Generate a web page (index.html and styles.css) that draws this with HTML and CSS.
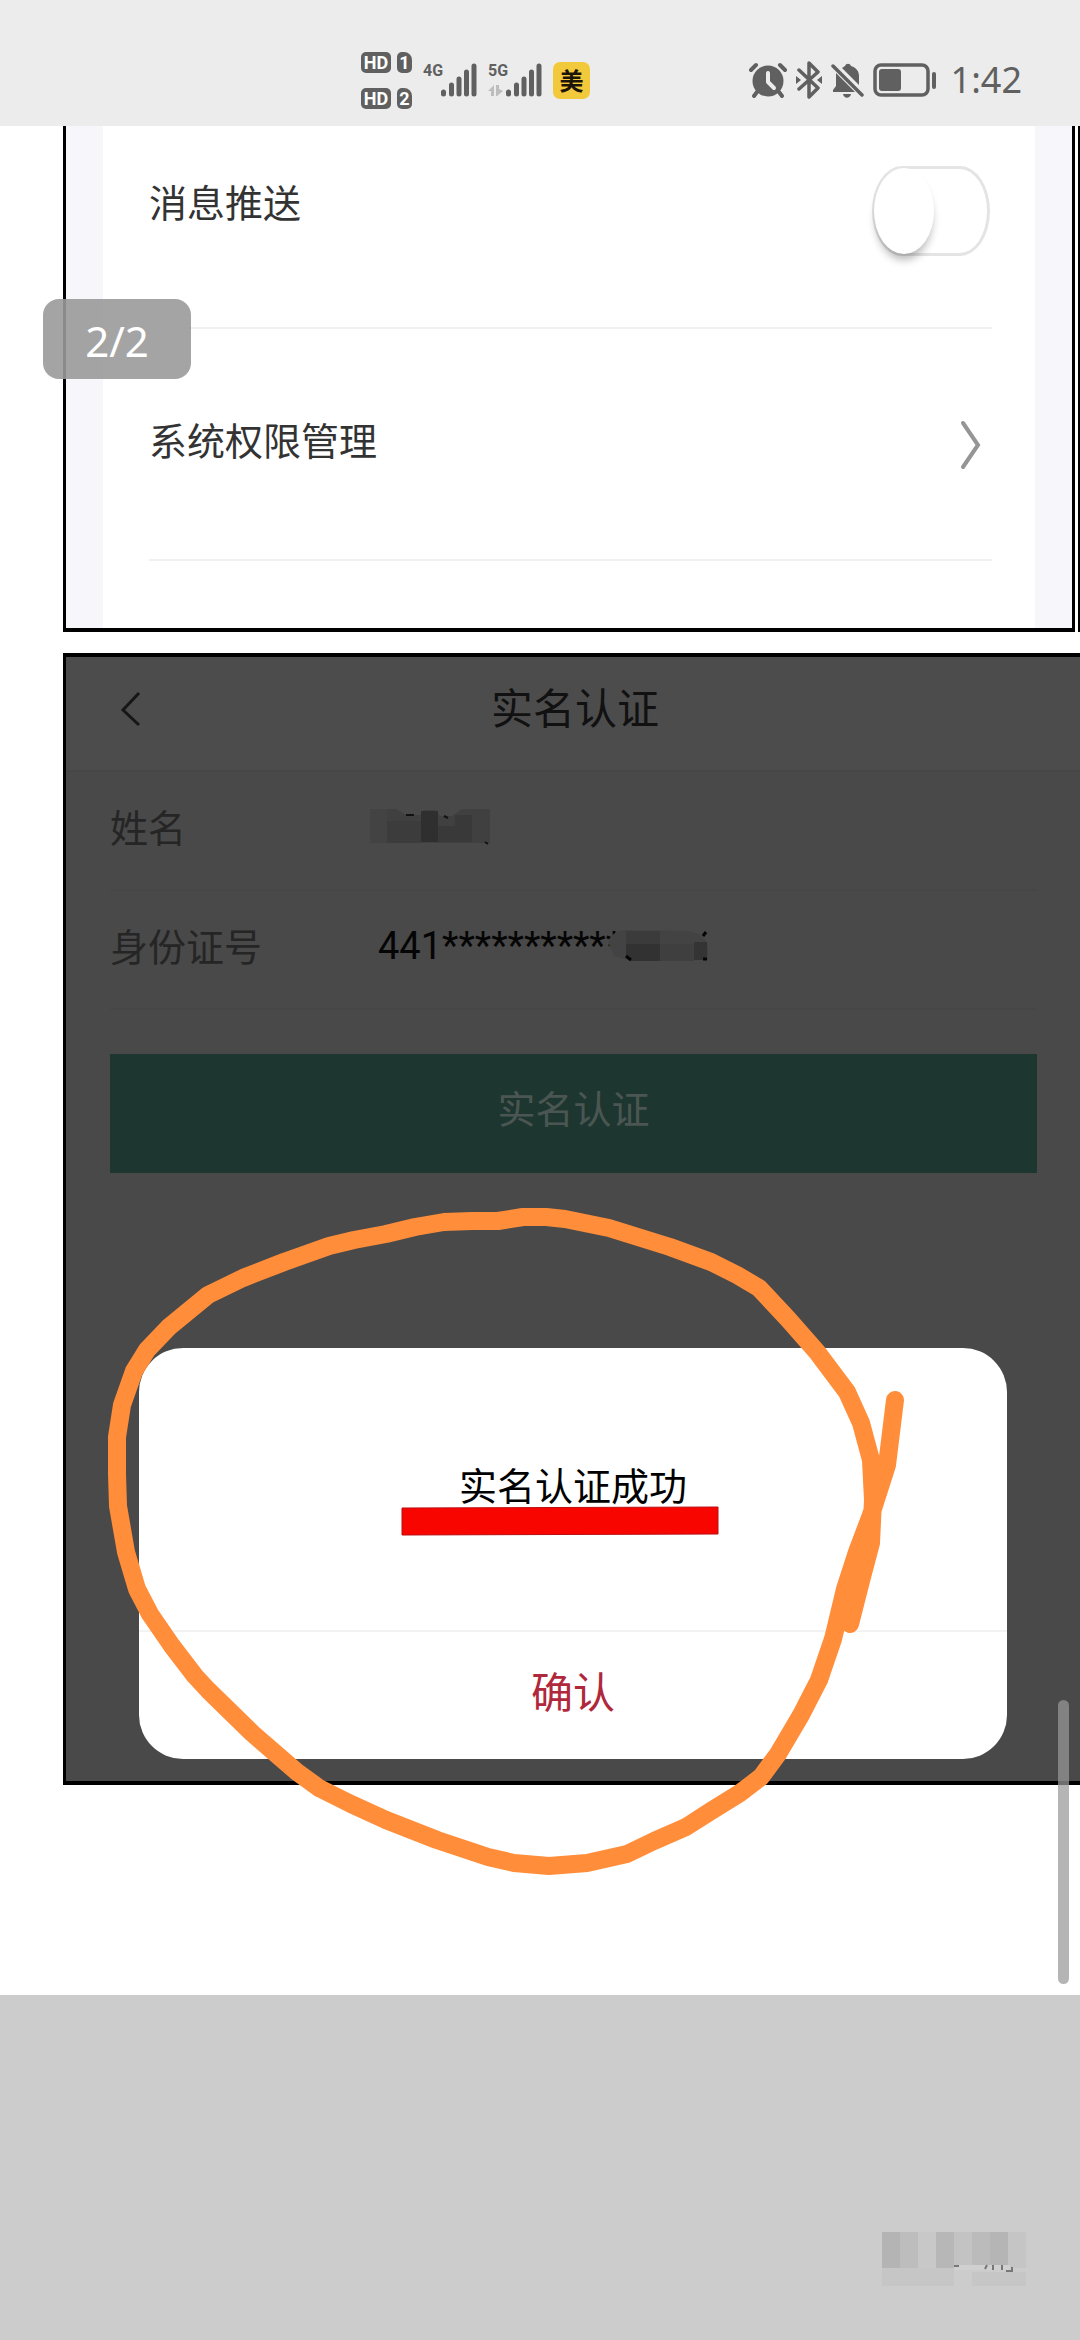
FILE: index.html
```html
<!DOCTYPE html>
<html lang="zh-CN">
<head>
<meta charset="utf-8">
<meta name="viewport" content="width=device-width, initial-scale=1">
<title>实名认证</title>
<link rel="stylesheet" href="styles.css">
</head>
<body>
<header class="status">
  <div class="status-group">
    <div class="sims">
      <div class="sim"><span class="hd">HD</span><span class="slot">1</span></div>
      <div class="sim"><span class="hd">HD</span><span class="slot">2</span></div>
    </div>
    <div class="signal">
      <span class="net">4G</span>
      <svg width="54" height="34" viewBox="0 0 54 34" aria-hidden="true"><path d="M20.500 29v2M28.500 22v9M36 16v15M43.500 9v22M51 3v28" stroke="#606060" stroke-width="5" stroke-linecap="round"/></svg>
    </div>
    <div class="signal">
      <span class="net">5G</span>
      <svg width="54" height="34" viewBox="0 0 54 34" aria-hidden="true"><path d="M20.500 29v2M28.500 22v9M36 16v15M43.500 9v22M51 3v28" stroke="#606060" stroke-width="5" stroke-linecap="round"/><path d="M0 28l6-6v11H3v-5zM8 22h3v4l4 2-6 5H8z" fill="#bdbdbd"/></svg>
    </div>
    <span class="app">美</span>
  </div>
  <div class="status-group status-right">
    <svg width="38" height="36" viewBox="0 0 38 36" aria-hidden="true"><circle cx="19" cy="19" r="15.500" fill="#606060"/><path d="M2 8l5-5M36 8l-5-5M8 30l-3 4M30 30l3 4" stroke="#606060" stroke-width="4" stroke-linecap="round"/><path d="M19 11v9l6 6" fill="none" stroke="#ececec" stroke-width="4" stroke-linecap="round" stroke-linejoin="round"/></svg>
    <svg width="28" height="38" viewBox="0 0 28 38" aria-hidden="true"><path d="M4 9l19 18-9 9V2l9 9L4 28" fill="none" stroke="#606060" stroke-width="3.500" stroke-linejoin="round" stroke-linecap="round"/><path d="M1 15l5 4-5 4zM27 15l-5 4 5 4z" fill="#606060"/></svg>
    <svg width="34" height="36" viewBox="0 0 34 36" aria-hidden="true"><path d="M2 30v-2l3-4V11l19 19zM11 6l3-2c1-3 5-3 6 0 6 2 8 6 8 10v9zM12 32h8c-1 5-7 5-8 0z" fill="#606060"/><path d="M2 4l29 29" stroke="#606060" stroke-width="3.500" stroke-linecap="round"/></svg>
    <svg width="66" height="34" viewBox="0 0 66 34" aria-hidden="true"><rect x="2" y="2" width="53" height="30" rx="6" fill="none" stroke="#606060" stroke-width="3.500"/><rect x="6" y="6" width="22" height="22" rx="3" fill="#606060"/><path d="M61 11v13" stroke="#606060" stroke-width="4" stroke-linecap="round"/></svg>
    <time class="clock">1:42</time>
  </div>
</header>

<main class="viewer">
  <div class="shots">
    <section class="settings">
      <div class="settings-list">
        <div class="setting">
          <label for="push">消息推送</label>
          <input class="toggle" type="checkbox" id="push">
        </div>
        <button class="setting setting-link" type="button">
          <span>系统权限管理</span>
          <svg class="chevron" width="24" height="52" viewBox="0 0 24 52" aria-hidden="true"><path d="M5 4l15 22L5 48" fill="none" stroke="#959595" stroke-width="4" stroke-linecap="round"/></svg>
        </button>
      </div>
    </section>
    <div class="next-edge"></div>
  </div>

  <section class="verify">
    <div class="verify-head">
      <button class="back" type="button" aria-label="返回"><svg width="24" height="38" viewBox="0 0 24 38" aria-hidden="true"><path d="M21 4L5 21l16 15" fill="none" stroke="#161616" stroke-width="3"/></svg></button>
      <h1>实名认证</h1>
    </div>
    <div class="form">
      <dl class="fields">
        <div class="field">
          <dt>姓名</dt>
          <dd><svg width="120" height="36" viewBox="0 0 120 36" aria-hidden="true"><path d="M0 2q0-2 2-2h24l10 6h14l4-5h12l4 6h12l10-7h28v34H0z" fill="#404040"/><path d="M0 2q0-2 2-2h15v34H0z" fill="#434343"/><path d="M51 2h17v31H51z" fill="#2f2f2f"/><path d="M17 12h34v22H17z" fill="#3c3c3c"/><path d="M85 6h17v27H85zM68 17h17v16H68z" fill="#393939"/><path d="M36 6h8M74 7l4 2M115 33l3 2" stroke="#111" stroke-width="2"/></svg></dd>
        </div>
        <div class="field">
          <dt>身份证号</dt>
          <dd class="id">441***********<svg class="mask" width="100" height="32" viewBox="0 0 100 32" aria-hidden="true"><path d="M0 12Q4 0 20 0l60 1q20 3 20 20v9H20L6 26z" fill="#434343"/><path d="M18 14h34v17H22l-4-5z" fill="#323232"/><path d="M52 14h34v17H52z" fill="#3f3f3f"/><path d="M18 1h34v13H18z" fill="#3b3b3b"/><path d="M86 12h13v18H86z" fill="#343434"/><path d="M95 6l3-4M18 26l5 4M95 29h4" stroke="#050505" stroke-width="3"/></svg></dd>
        </div>
      </dl>
      <button class="submit" type="button">实名认证</button>
    </div>

    <div class="dialog" role="dialog" aria-labelledby="msg">
      <div class="dialog-body">
        <p id="msg">实名认证成功</p>
        <svg class="underline" width="318" height="30" viewBox="0 0 318 30" aria-hidden="true"><path d="M1 2L317 1v27L1 29z" fill="#f90500" stroke="#b80f12" stroke-width="1"/></svg>
      </div>
      <button class="confirm" type="button">确认</button>
    </div>

    <svg class="ink" width="820" height="680" viewBox="100 1200 820 680" aria-hidden="true"><path d="M895 1400L887 1465L871 1515L857 1552L845 1589L833 1639L819 1680L801 1715L778 1754L761 1777L740 1793L711 1811L686 1827L654 1841L627 1854L587 1863L549 1866L514 1863L488 1857L437 1840L386 1820L351 1804L319 1788L297 1772L252 1733L208 1690L195 1676L172 1646L150 1614L137 1589L126 1552L118 1506L117 1474L117 1437L122 1405L134 1371L147 1350L169 1327L208 1295L243 1278L284 1262L329 1246L354 1240L386 1234L415 1227L444 1222L472 1221L498 1221L523 1217L546 1217L565 1219L609 1228L670 1247L711 1262L737 1275L759 1288L788 1319L817 1352L847 1392L861 1423L871 1460L873 1500L871 1543L862 1577L850 1624" fill="none" stroke="#ff8d39" stroke-width="18" stroke-linecap="round" stroke-linejoin="round"/></svg>
  </section>

  <div class="page-count">2/2</div>
  <div class="scrollbar"></div>
</main>

<footer class="tray">
  <svg width="144" height="56" viewBox="0 0 144 56" aria-hidden="true">
    <path d="M0 0h36v36H0z" fill="#bdbdbd"/><path d="M0 0h18v36H0z" fill="#b4b4b4"/>
    <path d="M36 0h18v36H36z" fill="#c8c8c8"/><path d="M54 0h18v36H54z" fill="#b7b7b7"/>
    <path d="M72 0h18v33H72z" fill="#c3c3c3"/><path d="M90 0h18v33H90z" fill="#bbb"/>
    <path d="M108 0h18v33h-18z" fill="#b5b5b5"/><path d="M126 0h18v36h-18z" fill="#c5c5c5"/>
    <path d="M0 36h72v18H0zM90 40h54v14H90z" fill="#c6c6c6"/>
    <path d="M72 33h56v5H72z" fill="#d0d0d0"/>
    <path d="M72 34h5M103 37l2-4M111 33v5M120 33v5M124 39h6v-4" fill="none" stroke="#777" stroke-width="2"/>
  </svg>
</footer>
</body>
</html>
```
FILE: styles.css
```css
* { box-sizing: border-box; }

body {
  margin: 0;
  min-height: 100vh;
  display: flex;
  flex-direction: column;
  background: #fff;
  color: #333;
  font-family: "Noto Sans", "Noto Sans CJK SC", sans-serif;
  font-size: 38px;
}

button {
  font: inherit;
  border: 0;
  padding: 0;
  background: none;
  cursor: pointer;
}

svg { display: block; flex: none; }
p, h1, dl, dd { margin: 0; }

/* status bar */
.status {
  height: 126px;
  padding: 34px 58px 0 361px;
  display: flex;
  align-items: center;
  justify-content: space-between;
  background: #ececec;
  color: #606060;
}
.status-group { display: flex; align-items: center; gap: 11px; }
.status-right { gap: 8px; }
.sims { display: flex; flex-direction: column; gap: 15px; }
.sim { display: flex; gap: 6px; }
.hd, .slot {
  height: 21px;
  line-height: 21px;
  border-radius: 5px;
  background: #606060;
  color: #fff;
  font-family: Roboto, sans-serif;
  font-size: 18px;
  font-weight: 700;
  text-align: center;
}
.hd { width: 30px; }
.slot { width: 15px; border-top-right-radius: 8px; }
.signal { position: relative; }
.net {
  position: absolute;
  left: 0;
  top: 0;
  line-height: 16px;
  font-family: Roboto, sans-serif;
  font-size: 16px;
  font-weight: 700;
}
.app {
  width: 37px;
  height: 37px;
  line-height: 36px;
  border-radius: 7px;
  background: #f3c93c;
  color: #1d1608;
  font-family: "Noto Sans CJK SC", sans-serif;
  font-size: 24px;
  font-weight: 700;
  text-align: center;
}
.clock { margin-left: 4px; font-size: 36px; line-height: 36px; }

/* picture viewer */
.viewer { position: relative; padding-bottom: 210px; }
.shots { display: flex; gap: 3px; margin-left: 63px; }
.next-edge { width: 2px; background: #000; }

.settings {
  flex: 1;
  padding: 0 37px;
  border: solid #000;
  border-width: 0 3px 4px;
  background: #f6f6fb;
}
.settings-list { padding: 0 43px 67px 46px; background: #fff; }
.setting {
  width: 100%;
  padding: 40px 0 89px;
  display: flex;
  align-items: flex-start;
  justify-content: space-between;
  line-height: 72px;
  color: #333;
  border-bottom: 2px solid #f1f1f1;
}
.setting .toggle { margin-bottom: -18px; }
.setting-link { padding: 75px 10px 83px 0; }
.chevron { margin-top: 15px; }

.toggle {
  appearance: none;
  position: relative;
  width: 118px;
  height: 90px;
  margin: 0 2px 0 0;
  border: 3px solid #e4e4e4;
  border-radius: 30px / 45px;
}
.toggle::before {
  content: "";
  position: absolute;
  left: -1px;
  top: -1px;
  width: 60px;
  height: 86px;
  border-radius: 50%;
  background: #fff;
  box-shadow: 0 8px 9px -2px rgba(0, 0, 0, .28);
}

/* verification screen */
.verify {
  position: relative;
  margin: 21px 0 0 63px;
  padding-bottom: 22px;
  border: solid #000;
  border-width: 4px 0 4px 3px;
  background: #494949;
}
.verify-head {
  height: 115px;
  padding: 0 48px 12px 52px;
  display: grid;
  grid-template-columns: 30px 1fr 30px;
  align-items: center;
  background: #4c4c4c;
  border-bottom: 2px solid #474747;
}
.verify-head h1 {
  color: #111;
  font-size: 42px;
  font-weight: 400;
  line-height: 48px;
  text-align: center;
}
.form { padding: 0 43px 0 44px; }
.fields { margin-bottom: 44px; color: #252525; }
.field {
  height: 119px;
  display: flex;
  align-items: center;
  line-height: 48px;
  padding-bottom: 8px;
  border-bottom: 2px solid #464646;
}
.field dt { width: 260px; }
.id {
  display: flex;
  align-items: center;
  padding-left: 8px;
  color: #050505;
  font-family: Roboto, sans-serif;
}
.mask { margin-left: -14px; }
.submit {
  width: 100%;
  height: 119px;
  padding-bottom: 14px;
  background: #1e3630;
  color: #4b5653;
}

.dialog {
  margin: 175px 73px 0;
  border-radius: 44px;
  background: #fff;
  overflow: hidden;
}
.dialog-body {
  height: 282px;
  padding-top: 116px;
  display: flex;
  flex-direction: column;
  align-items: center;
  color: #000;
  line-height: 42px;
}
.underline { margin-right: 26px; }
.confirm {
  width: 100%;
  height: 129px;
  padding-bottom: 12px;
  border-top: 2px solid #f3f3f3;
  color: #b0283c;
  font-size: 42px;
}

/* hand-drawn circle over the screenshot */
.ink { position: absolute; left: 34px; top: 543px; pointer-events: none; }

.page-count {
  position: absolute;
  left: 43px;
  top: 173px;
  width: 148px;
  height: 80px;
  line-height: 84px;
  border-radius: 16px;
  background: rgba(154, 154, 154, .9);
  color: #fff;
  font-size: 42px;
  text-align: center;
}
.scrollbar {
  position: absolute;
  right: 11px;
  bottom: 11px;
  width: 11px;
  height: 284px;
  border-radius: 6px;
  background: rgba(153, 153, 153, .72);
}

.tray {
  flex: 1;
  min-height: 160px;
  padding: 0 54px 52px;
  display: flex;
  align-items: flex-end;
  justify-content: flex-end;
  background: #ccc;
}
```
